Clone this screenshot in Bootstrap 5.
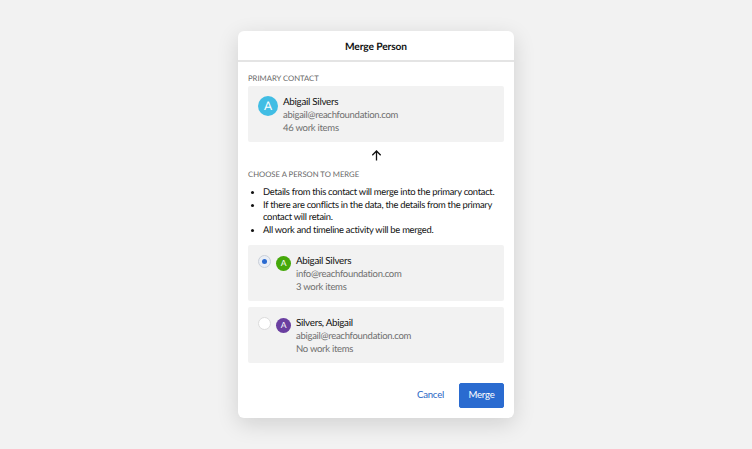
<!DOCTYPE html>
<html lang="en">
<head>
  <meta charset="UTF-8">
  <title>Merge Person</title>
  <link href="https://cdn.jsdelivr.net/npm/bootstrap@5.3.0/dist/css/bootstrap.min.css" rel="stylesheet">
  <style>
    html, body { height: 449px; overflow: hidden; }
    body { background: #f2f2f2; font-family: Lato, "Liberation Sans", sans-serif; font-size: 9.5px; letter-spacing: -.28px; color: #111; text-rendering: geometricPrecision; }
    .merge-shell { height: 449px; padding-top: 31px; }
    .merge-dialog { width: 276px; height: 387px; border: 0; border-radius: 6px; box-shadow: 0 6px 22px rgba(0,0,0,.14); overflow: hidden; }
    .merge-head { height: 31px; border-bottom: 2px solid #e4e4e4; font-size: 10.2px; font-weight: 700; letter-spacing: -.1px; line-height: 33px; text-align: center; color: #111; }
    .merge-body { padding: 10px 10px 0; }
    .merge-label { font-size: 7.7px; line-height: 12px; letter-spacing: 0; color: #666; text-transform: uppercase; }
    .merge-label-top { margin-bottom: 2px; }
    .person-box { background: #f2f2f2; border-radius: 2px; height: 56px; padding: 9.5px 10px; line-height: 13px; gap: 5px; }
    .person-gap { margin-bottom: 6px; }
    .person-sub { color: #6f6f6f; }
    .person-name { font-size: 9.8px; }
    .person-avatar { width: 20px; height: 20px; font-size: 12px; }
    .avatar-small { width: 15px; height: 15px; font-size: 8.5px; margin-top: 1px; }
    .avatar-blue { background: #41bde4; }
    .avatar-green { background: #45a80a; }
    .avatar-purple { background: #6a3fa0; }
    .arrow-row { height: 26px; }
    .merge-list { padding-left: 15px; margin: 7px 0 8px; line-height: 12.5px; font-size: 9.4px; }
    .pick-radio { width: 13px; height: 13px; border-radius: 50%; background: #fff; border: 1px solid #dcdcdc; flex: none; }
    .pick-radio.is-on { background: #e9eef6; border-color: #c9cfd8; }
    .pick-radio.is-on::after { content: ""; width: 5px; height: 5px; border-radius: 50%; background: #2a6ad0; }
    .merge-foot { padding: 20px 10px 0; gap: 5px; }
    .btn-cancel { font-size: 9.6px; letter-spacing: -.2px; color: #2a66c4; padding: 0 0 0 2px; width: 49px; height: 25px; }
    .btn-merge { font-size: 9.6px; letter-spacing: -.2px; background: #2a6bd0; border-color: #2a6bd0; border-radius: 2px; width: 45px; height: 25px; padding: 0; }
  </style>
</head>
<body>
  <div class="merge-shell d-flex justify-content-center">
    <div class="card merge-dialog">
      <div class="merge-head">Merge Person</div>
      <div class="merge-body">
        <div class="merge-label merge-label-top">Primary contact</div>
        <div class="person-box d-flex">
          <div class="person-avatar avatar-blue rounded-circle text-white d-flex align-items-center justify-content-center flex-shrink-0">A</div>
          <div>
            <div class="person-name">Abigail Silvers</div>
            <div class="person-sub">abigail@reachfoundation.com</div>
            <div class="person-sub">46 work items</div>
          </div>
        </div>
        <div class="arrow-row d-flex align-items-center justify-content-center">
          <svg width="11" height="11" viewBox="0 0 11 11" fill="none" stroke="#111" stroke-width="1.3"><path d="M5.5 10.5V1M1.3 5.2 5.5 1l4.2 4.2"/></svg>
        </div>
        <div class="merge-label">Choose a person to merge</div>
        <ul class="merge-list">
          <li>Details from this contact will merge into the primary contact.</li>
          <li>If there are conflicts in the data, the details from the primary contact will retain.</li>
          <li>All work and timeline activity will be merged.</li>
        </ul>
        <div class="person-box person-gap d-flex">
          <span class="pick-radio is-on d-flex align-items-center justify-content-center"></span>
          <div class="person-avatar avatar-small avatar-green rounded-circle text-white d-flex align-items-center justify-content-center flex-shrink-0">A</div>
          <div>
            <div class="person-name">Abigail Silvers</div>
            <div class="person-sub">info@reachfoundation.com</div>
            <div class="person-sub">3 work items</div>
          </div>
        </div>
        <div class="person-box d-flex">
          <span class="pick-radio"></span>
          <div class="person-avatar avatar-small avatar-purple rounded-circle text-white d-flex align-items-center justify-content-center flex-shrink-0">A</div>
          <div>
            <div class="person-name">Silvers, Abigail</div>
            <div class="person-sub">abigail@reachfoundation.com</div>
            <div class="person-sub">No work items</div>
          </div>
        </div>
      </div>
      <div class="merge-foot d-flex justify-content-end">
        <button type="button" class="btn btn-link text-decoration-none btn-cancel">Cancel</button>
        <button type="button" class="btn btn-primary btn-merge">Merge</button>
      </div>
    </div>
  </div>
  <script src="https://cdn.jsdelivr.net/npm/bootstrap@5.3.0/dist/js/bootstrap.bundle.min.js"></script>
</body>
</html>
